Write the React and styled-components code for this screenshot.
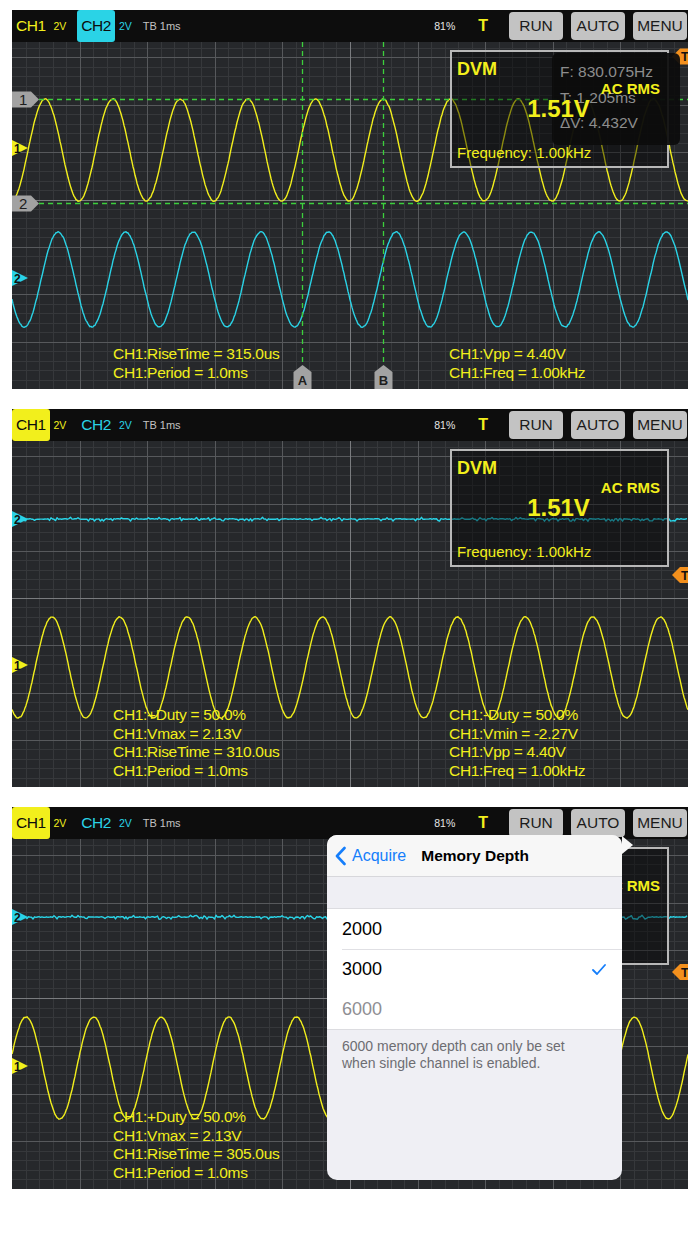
import React from 'react'
import styled, { createGlobalStyle } from 'styled-components'

const W = 676
const HEAD = 32
const PERIOD = W / 10
const YELLOW = '#f2ef1c'
const CYAN = '#2ad3e6'
const CURSOR = '#3ccf3c'

const GlobalStyle = createGlobalStyle`
  body {
    margin: 0;
    background: #fff;
    font-family: "Liberation Sans", Arial, sans-serif;
  }
`

const Page = styled.main`
  display: flex;
  flex-direction: column;
  gap: 20px;
  padding: 10px 0 0 12px;
`

const Panel = styled.section`
  position: relative;
  width: ${W}px;
  height: ${p => p.$h}px;
  display: flex;
  flex-direction: column;
  background: #26282b;
  overflow: hidden;
`

/* top status bar */
const Header = styled.header`
  flex: none;
  height: ${HEAD}px;
  display: flex;
  align-items: center;
  padding-right: 1px;
  background: #0d0d0d;
`

const ChannelGroup = styled.div`
  display: flex;
  align-items: center;
  height: 100%;
  margin-right: 11px;
`

const ChannelChip = styled.span`
  height: 100%;
  display: flex;
  align-items: center;
  padding: 0 4px;
  border-radius: 3px;
  font-size: 15.5px;
  letter-spacing: -0.5px;
  color: ${p => (p.$on ? '#0c0c0c' : p.$color)};
  background: ${p => (p.$on ? p.$color : 'transparent')};
`

const Volts = styled.span`
  margin-left: 4px;
  font-size: 10.5px;
  color: ${p => p.$color};
`

const Timebase = styled.span`
  font-size: 11px;
  color: #c2c2c2;
`

const Spacer = styled.div`
  flex: 1;
`

const Battery = styled.span`
  margin-right: 23px;
  font-size: 10.5px;
  color: #e6e6e6;
`

const Trig = styled.span`
  margin-right: 21px;
  font-size: 16px;
  font-weight: bold;
  color: ${YELLOW};
`

const Buttons = styled.div`
  display: flex;
  gap: 8px;
`

const Button = styled.button`
  width: 54px;
  height: 28px;
  padding: 0;
  border: 0;
  border-radius: 4px;
  background: #c3c3c3;
  color: #1b1b1b;
  font: 15.5px "Liberation Sans", Arial, sans-serif;
`

/* plot area below the bar */
const Plot = styled.div`
  position: relative;
  flex: 1;
`

const Screen = styled.svg`
  display: block;
`

const DvmFrame = styled.div`
  position: absolute;
  left: 438px;
  top: 8px;
  width: 219px;
  height: 118px;
  box-sizing: border-box;
  display: flex;
  flex-direction: column;
  padding: 6px 7px 4px 5px;
  border: 2px solid #b8b8b8;
  background: rgba(0, 0, 0, 0.42);
  color: ${YELLOW};
`

const DvmTitle = styled.div`
  font-size: 18px;
  font-weight: bold;
  line-height: 22px;
`

const DvmMode = styled.div`
  position: relative;
  z-index: 2;
  align-self: flex-end;
  font-size: 15px;
  font-weight: bold;
  line-height: 18px;
`

const DvmValue = styled.div`
  position: relative;
  z-index: 2;
  align-self: center;
  margin-top: -2px;
  font-size: 24px;
  font-weight: bold;
  line-height: 26px;
`

const DvmFreq = styled.div`
  margin-top: auto;
  font-size: 15px;
  line-height: 18px;
`

const Readout = styled.div`
  position: absolute;
  z-index: 1;
  left: 540px;
  top: 11px;
  width: 128px;
  height: 92px;
  box-sizing: border-box;
  padding: 6px 8px;
  border-radius: 6px;
  background: rgba(12, 12, 12, 0.93);
  color: #8d8d8d;
  font-size: 15.5px;
  line-height: 25.5px;
`

const Measures = styled.div`
  position: absolute;
  left: 101px;
  bottom: 7px;
  display: flex;
  color: ${YELLOW};
  font-size: 15.5px;
  line-height: 18.5px;
  letter-spacing: -0.3px;
`

const MeasureColumn = styled.div`
  width: 336px;
`

/* memory depth popover */
const Popover = styled.div`
  position: absolute;
  z-index: 5;
  left: 315px;
  top: 28px;
  width: 295px;
  height: 345px;
  display: flex;
  flex-direction: column;
  border-radius: 10px;
  background: #efeff4;

  &::after {
    content: '';
    position: absolute;
    right: -11px;
    top: 1px;
    border-left: 11px solid #f7f7f7;
    border-top: 9px solid transparent;
    border-bottom: 9px solid transparent;
  }
`

const NavBar = styled.div`
  height: 41px;
  display: flex;
  align-items: center;
  padding-left: 8px;
  border-radius: 10px 10px 0 0;
  border-bottom: 1px solid #d7d7db;
  background: #f7f7f7;
`

const Back = styled.span`
  display: flex;
  align-items: center;
  gap: 6px;
  margin-right: 15px;
  color: #157efb;
  font-size: 16px;
`

const NavTitle = styled.span`
  color: #000;
  font-size: 15.5px;
  font-weight: bold;
`

const Band = styled.div`
  height: 31px;
`

const Rows = styled.div`
  border-top: 1px solid #dcdce0;
  border-bottom: 1px solid #dcdce0;
  background: #fff;
`

const Row = styled.div`
  position: relative;
  height: 40px;
  display: flex;
  align-items: center;
  justify-content: space-between;
  padding: 0 16px 0 15px;
  font-size: 18px;
  color: ${p => (p.$disabled ? '#8e8e93' : '#000')};

  & + &::before {
    content: '';
    position: absolute;
    left: 15px;
    right: 0;
    top: 0;
    border-top: 1px solid #e0e0e4;
  }
`

const Note = styled.p`
  margin: 0;
  padding: 8px 15px;
  color: #6d6d72;
  font-size: 14px;
  line-height: 16.5px;
`

function seeded(seed) {
  let s = seed
  return () => {
    s = (s * 16807) % 2147483647
    return s / 2147483647
  }
}

function sineWave(cy, amp, x0, seed) {
  const rnd = seeded(seed)
  const pts = []
  for (let x = 0; x <= W; x += 1) {
    const y = cy - amp * Math.cos((2 * Math.PI * (x - x0)) / PERIOD) + (rnd() - 0.5) * 0.9
    pts.push(`${x},${y.toFixed(1)}`)
  }
  return 'M' + pts.join('L')
}

function noisyFlat(cy, seed) {
  const rnd = seeded(seed)
  const pts = []
  for (let x = 0; x <= W; x += 1.5) {
    const r = rnd()
    let y = cy + (rnd() - 0.5) * 0.8
    if (r < 0.12) y += 1.8
    else if (r > 0.94) y -= 1.4
    pts.push(`${x},${y.toFixed(1)}`)
  }
  return 'M' + pts.join('L')
}

function gridPaths(h) {
  let minor = ''
  let major = ''
  for (let i = 1; i < 50; i++) {
    if (i === 25) continue
    const x = Math.round((i * W) / 50) + 0.5
    if (i % 5) minor += `M${x} 0V${h}`
    else major += `M${x} 0V${h}`
  }
  for (let j = 1; j < 40; j++) {
    if (j === 20) continue
    const y = Math.round((j * h) / 40) + 0.5
    if (j % 5) minor += `M0 ${y}H${W}`
    else major += `M0 ${y}H${W}`
  }
  const center = `M${Math.round(W / 2) + 0.5} 0V${h}M0 ${Math.round(h / 2) + 0.5}H${W}`
  return { minor, major, center }
}

const ChannelMark = ({ y, color, label }) => (
  <g>
    <polygon points={`0,${y - 8} 16,${y} 0,${y + 8}`} fill={color} />
    <text x="2" y={y + 4.5} fontSize="12" fontWeight="bold" fill="#111">{label}</text>
  </g>
)

const LevelCursor = ({ y, label }) => (
  <g>
    <line x1="27" x2={W} y1={y} y2={y} stroke={CURSOR} strokeWidth="1.3" strokeDasharray="5 4" />
    <polygon points={`0,${y - 8} 19,${y - 8} 27,${y} 19,${y + 8} 0,${y + 8}`} fill="#a2a2a2" />
    <text x="7" y={y + 5.5} fontSize="15" fill="#1d1d1d">{label}</text>
  </g>
)

const TimeCursor = ({ x, h, label }) => (
  <g>
    <line x1={x} x2={x} y1={HEAD} y2={h - 24} stroke={CURSOR} strokeWidth="1.3" strokeDasharray="5 4" />
    <polygon points={`${x - 9},${h} ${x - 9},${h - 17} ${x},${h - 24} ${x + 9},${h - 17} ${x + 9},${h}`} fill="#a2a2a2" />
    <text x={x} y={h - 4} fontSize="13" fontWeight="bold" textAnchor="middle" fill="#1d1d1d">{label}</text>
  </g>
)

const TrigMark = ({ y }) => (
  <g>
    <polygon points={`${W - 16},${y} ${W - 8},${y - 8} ${W},${y - 8} ${W},${y + 8} ${W - 8},${y + 8}`} fill="#f3901d" />
    <text x={W - 7} y={y + 4.5} fontSize="12.5" fontWeight="bold" fill="#111">T</text>
  </g>
)

const Chevron = () => (
  <svg width="11" height="20" viewBox="0 0 11 20">
    <polyline points="9.5,2 2,10 9.5,18" fill="none" stroke="#157efb" strokeWidth="2.6" strokeLinecap="round" strokeLinejoin="round" />
  </svg>
)

const Check = () => (
  <svg width="14" height="11" viewBox="0 0 14 11">
    <polyline points="1,6 5,10 13,1" fill="none" stroke="#157efb" strokeWidth="1.8" strokeLinecap="round" strokeLinejoin="round" />
  </svg>
)

const Scope = ({ h, active, traces, marks, trigY, levels = [], times = [], readout, measures, children }) => {
  const grid = gridPaths(h)
  return (
    <Panel $h={h}>
      <Header>
        <ChannelGroup>
          <ChannelChip $color={YELLOW} $on={active === 1}>CH1</ChannelChip>
          <Volts $color={YELLOW}>2V</Volts>
        </ChannelGroup>
        <ChannelGroup>
          <ChannelChip $color={CYAN} $on={active === 2}>CH2</ChannelChip>
          <Volts $color={CYAN}>2V</Volts>
        </ChannelGroup>
        <Timebase>TB 1ms</Timebase>
        <Spacer />
        <Battery>81%</Battery>
        <Trig>T</Trig>
        <Buttons>
          <Button>RUN</Button>
          <Button>AUTO</Button>
          <Button>MENU</Button>
        </Buttons>
      </Header>
      <Plot>
        <Screen width={W} height={h - HEAD} viewBox={`0 ${HEAD} ${W} ${h - HEAD}`}>
          <path d={grid.minor} stroke="#36383b" strokeWidth="1" />
          <path d={grid.major} stroke="#57595c" strokeWidth="1" />
          <path d={grid.center} stroke="#7a7c7f" strokeWidth="1" />
          {traces.map((t, i) => (
            <path key={i} d={t.d} fill="none" stroke={t.color} strokeWidth="1.4" strokeLinejoin="round" />
          ))}
          {levels.map(l => <LevelCursor key={l.label} {...l} />)}
          {times.map(t => <TimeCursor key={t.label} h={h} {...t} />)}
          {marks.map(m => <ChannelMark key={m.label} {...m} />)}
          <TrigMark y={trigY} />
        </Screen>
        <DvmFrame>
          <DvmTitle>DVM</DvmTitle>
          <DvmMode>AC RMS</DvmMode>
          <DvmValue>1.51V</DvmValue>
          <DvmFreq>Frequency: 1.00kHz</DvmFreq>
        </DvmFrame>
        {readout && (
          <Readout>
            {readout.map(r => <div key={r}>{r}</div>)}
          </Readout>
        )}
        <Measures>
          {measures.map((col, i) => (
            <MeasureColumn key={i}>
              {col.map(m => <div key={m}>{m}</div>)}
            </MeasureColumn>
          ))}
        </Measures>
      </Plot>
      {children}
    </Panel>
  )
}

const App = () => (
  <>
    <GlobalStyle />
    <Page>
      <Scope
        h={379}
        active={2}
        traces={[
          { d: sineWave(140, 51, 33, 7), color: YELLOW },
          { d: sineWave(269.5, 47.5, 46, 13), color: CYAN },
        ]}
        marks={[
          { y: 138, color: YELLOW, label: '1' },
          { y: 268, color: CYAN, label: '2' },
        ]}
        levels={[
          { y: 89.5, label: '1' },
          { y: 193.5, label: '2' },
        ]}
        times={[
          { x: 290.5, label: 'A' },
          { x: 371.5, label: 'B' },
        ]}
        trigY={46.5}
        readout={['F: 830.075Hz', 'T: 1.205ms', 'ΔV: 4.432V']}
        measures={[
          ['CH1:RiseTime = 315.0us', 'CH1:Period = 1.0ms'],
          ['CH1:Vpp = 4.40V', 'CH1:Freq = 1.00kHz'],
        ]}
      />
      <Scope
        h={378}
        active={1}
        traces={[
          { d: noisyFlat(110, 21), color: CYAN },
          { d: sineWave(258.5, 50.5, 40, 31), color: YELLOW },
        ]}
        marks={[
          { y: 110, color: CYAN, label: '2' },
          { y: 256, color: YELLOW, label: '1' },
        ]}
        trigY={166}
        measures={[
          ['CH1:+Duty = 50.0%', 'CH1:Vmax = 2.13V', 'CH1:RiseTime = 310.0us', 'CH1:Period = 1.0ms'],
          ['CH1:-Duty = 50.0%', 'CH1:Vmin = -2.27V', 'CH1:Vpp = 4.40V', 'CH1:Freq = 1.00kHz'],
        ]}
      />
      <Scope
        h={382}
        active={1}
        traces={[
          { d: noisyFlat(110, 41), color: CYAN },
          { d: sineWave(261, 51, 14, 53), color: YELLOW },
        ]}
        marks={[
          { y: 110, color: CYAN, label: '2' },
          { y: 259, color: YELLOW, label: '1' },
        ]}
        trigY={165}
        measures={[
          ['CH1:+Duty = 50.0%', 'CH1:Vmax = 2.13V', 'CH1:RiseTime = 305.0us', 'CH1:Period = 1.0ms'],
        ]}
      >
        <Popover>
          <NavBar>
            <Back>
              <Chevron />
              Acquire
            </Back>
            <NavTitle>Memory Depth</NavTitle>
          </NavBar>
          <Band />
          <Rows>
            <Row>2000</Row>
            <Row>
              3000
              <Check />
            </Row>
            <Row $disabled>6000</Row>
          </Rows>
          <Note>
            6000 memory depth can only be set
            <br />
            when single channel is enabled.
          </Note>
        </Popover>
      </Scope>
    </Page>
  </>
)

export default App
